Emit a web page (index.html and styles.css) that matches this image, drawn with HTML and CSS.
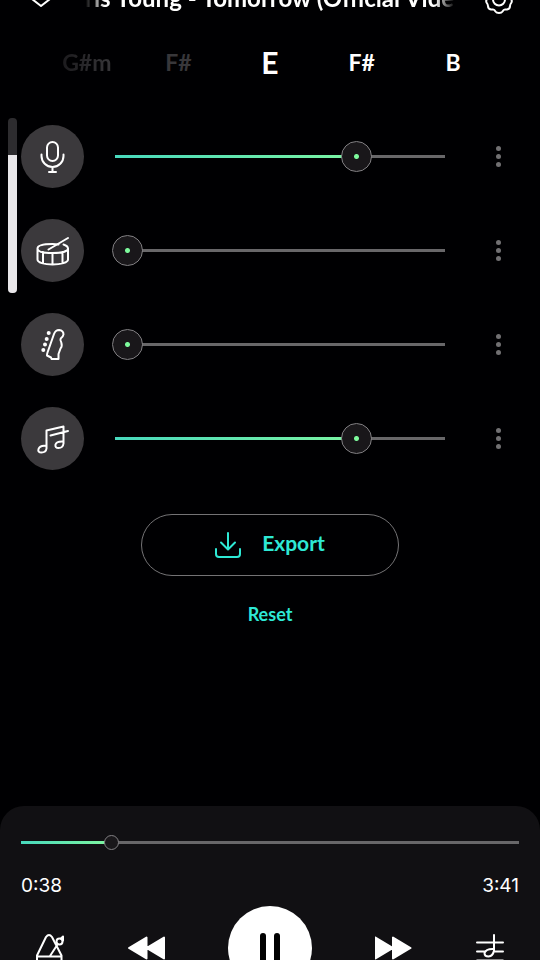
FILE: index.html
```html
<!DOCTYPE html>
<html lang="en">
<head>
<meta charset="utf-8">
<meta name="viewport" content="width=device-width, initial-scale=1">
<title>Mixer</title>
<link rel="stylesheet" href="styles.css">
</head>
<body>
<div class="app">
  <header class="header">
    <button class="icon-button" type="button" aria-label="Close player">
      <svg width="20" height="20" viewBox="0 0 20 20" class="line-icon"><path d="M1 9l9 7 9-7"/></svg>
    </button>
    <h1 class="title">ris Young - Tomorrow (Official Vide</h1>
    <button class="icon-button" type="button" aria-label="Settings">
      <svg width="28" height="28" viewBox="0 0 28 28" class="line-icon"><path d="M12 1H16Q18 4.500 19.500 4.500H22.500Q25.500 5 25.500 8Q24.500 10.500 25 12Q27.500 14 26.500 16.500Q25 18.500 25 20Q25 23 22 23.500H20Q18.500 23.500 17.500 25.500Q16.500 27 14 27Q11.500 27 10.500 25.500Q9.500 23.500 8 23.500H6Q3 23 3 20Q3 18.500 1.500 16.500Q.5 14 3 12Q3.500 10.500 2.500 8Q2.500 5 5.500 4.500H8.500Q10 4.500 12 1Z"/><circle cx="14" cy="13.500" r="6"/></svg>
    </button>
  </header>

  <ol class="chords">
    <li class="chord past far">G#m</li>
    <li class="chord past">F#</li>
    <li class="chord current">E</li>
    <li class="chord">F#</li>
    <li class="chord">B</li>
  </ol>

  <main class="main">
    <div class="volume" role="img" aria-label="Volume"><div class="volume-level"></div></div>

    <div class="track">
      <label class="badge" for="vocals" aria-label="Vocals">
        <svg width="34" height="34" viewBox="0 0 34 34" class="line-icon"><rect x="11" y="2" width="11" height="19" rx="5.500"/><path d="M5.500 14.500v1.500a11 11 0 0 0 22 0v-1.500M16.500 27v5M13 32h7"/></svg>
      </label>
      <input class="fader" id="vocals" type="range" value="75" style="--level: 75%">
      <button class="more" type="button" aria-label="Vocals options"><span></span><span></span><span></span></button>
    </div>
    <div class="track">
      <label class="badge" for="drums" aria-label="Drums">
        <svg width="34" height="34" viewBox="0 0 34 34" class="line-icon"><path d="M27.500 10.500Q32 12 32 14.500C32 17.500 25 19 16.500 19S1.500 17.500 1.500 14.500 8 10 16.500 10q3.500 0 6 .4M1.500 14.500v11C1.500 28.500 8 30.500 16.500 30.500S32 28.500 32 25.500v-11M7 18v11M16.500 19v11.500M26.500 18v11"/><path d="M12.500 15.500L32 4"/></svg>
      </label>
      <input class="fader" id="drums" type="range" value="0" style="--level: 0%">
      <button class="more" type="button" aria-label="Drums options"><span></span><span></span><span></span></button>
    </div>
    <div class="track">
      <label class="badge" for="bass" aria-label="Bass">
        <svg width="34" height="34" viewBox="0 0 34 34" class="line-icon"><path d="M11.500 24.500L18 6Q19.500 2 23 2Q27.500 2.500 27.500 6.500Q27.300 8.500 24.700 10.500Q23.800 12 25.300 14.500Q26.500 18 24.500 20.500L22.500 26V31H15.500L15 29.500L11 27.500Q11 26 11.500 24.500Z"/><g class="pegs"><circle cx="12.700" cy="5" r="2"/><circle cx="10.700" cy="11" r="2"/><circle cx="9" cy="16.500" r="2"/><circle cx="7.300" cy="22" r="2"/></g></svg>
      </label>
      <input class="fader" id="bass" type="range" value="0" style="--level: 0%">
      <button class="more" type="button" aria-label="Bass options"><span></span><span></span><span></span></button>
    </div>
    <div class="track">
      <label class="badge" for="other" aria-label="Other instruments">
        <svg width="34" height="34" viewBox="0 0 34 34" class="line-icon"><path d="M10.500 26.500V8.500L27.500 4.500V21.500M14.500 13.500L32 9M10.500 24Q4 23 2.500 27Q1.500 30.500 5.500 30.500Q10 30.500 10.500 26.500M27.500 19.500Q20.500 19 19.500 22.500Q18.800 26 22.500 26Q27 26 27.500 21.500"/></svg>
      </label>
      <input class="fader" id="other" type="range" value="75" style="--level: 75%">
      <button class="more" type="button" aria-label="Other options"><span></span><span></span><span></span></button>
    </div>
  </main>

  <div class="actions">
    <button class="export" type="button">
      <svg width="26" height="26" viewBox="0 0 26 26" class="line-icon"><path d="M1 17v5q0 3 3 3h18q3 0 3-3v-5M13 1v16M6 10.500l7 7 7-7"/></svg>
      <span>Export</span>
    </button>
    <button class="reset" type="button">Reset</button>
  </div>

  <footer class="player">
    <input class="seek" type="range" max="221" value="38" aria-label="Position" style="--level: 17.2%">
    <div class="times"><span>0:38</span><span>3:41</span></div>
    <div class="controls">
      <button class="control" type="button" aria-label="Metronome">
        <svg width="28" height="28" viewBox="0 0 28 28" class="line-icon"><path d="M1 27v-5.500L10 3Q13 -1 16 3L25.500 21.500V27H1M1 22.500H25.500M14 22L21.500 10.500M25 4.500L27 2.500v4"/><circle cx="23.500" cy="7.500" r="3"/></svg>
      </button>
      <button class="control" type="button" aria-label="Rewind">
        <svg width="38" height="24" viewBox="0 0 38 24" class="solid-icon"><path d="M19.500 1.500v21L2 12ZM37 1.500v21L19.500 12Z"/></svg>
      </button>
      <button class="pause" type="button" aria-label="Pause"><span></span><span></span></button>
      <button class="control" type="button" aria-label="Fast forward">
        <svg width="38" height="24" viewBox="0 0 38 24" class="solid-icon"><path d="M.5 1.500v21L18 12ZM18 1.500v21L35.500 12Z"/></svg>
      </button>
      <button class="control" type="button" aria-label="Chords">
        <svg width="28" height="28" viewBox="0 0 28 28" class="line-icon"><path d="M1 8.500h26M1 17.500h8M18 17.500h9M1 26.500h26M18 1v16.500M18 15Q10 14.500 8.500 19Q8.500 22.500 12.500 22.500Q17 22 18 16.500"/></svg>
      </button>
    </div>
  </footer>
</div>
</body>
</html>
```
FILE: styles.css
```css
* {
  box-sizing: border-box;
}

body {
  margin: 0;
  background: #000002;
  color: #fff;
  font-family: Lato, "Liberation Sans", sans-serif;
}

button {
  padding: 0;
  border: 0;
  background: none;
  color: inherit;
  font: inherit;
}

svg {
  display: block;
}

.line-icon {
  fill: none;
  stroke: currentColor;
  stroke-width: 2;
  stroke-linecap: round;
  stroke-linejoin: round;
}

.solid-icon {
  fill: currentColor;
  stroke: currentColor;
  stroke-width: 2;
  stroke-linejoin: round;
}

.pegs {
  fill: currentColor;
  stroke: none;
}

.app {
  display: flex;
  flex-direction: column;
  height: 100vh;
  overflow: hidden;
}

.header {
  display: flex;
  flex: none;
  align-items: center;
  gap: 24px;
  height: 48px;
  margin-top: -24px;
  padding: 0 21px;
}

.icon-button {
  display: grid;
  flex: none;
  place-items: center;
  width: 40px;
  height: 40px;
}

.title {
  flex: 1;
  margin: 0;
  padding-bottom: 4px;
  overflow: hidden;
  font-size: 24px;
  line-height: 40px;
  font-weight: 700;
  white-space: nowrap;
  mask-image: linear-gradient(90deg, transparent, #000 20px, #000 calc(100% - 20px), transparent);
}

.chords {
  display: grid;
  flex: none;
  grid-template-columns: repeat(5, 1fr);
  align-items: center;
  height: 48px;
  margin: 14px 0 0;
  padding: 0 41px;
  list-style: none;
}

.chord {
  font-size: 23px;
  line-height: 40px;
  font-weight: 700;
  text-align: center;
}

.chord.past {
  color: #38373a;
}

.chord.far {
  color: transparent;
  background: linear-gradient(90deg, #161518 10%, #38373a 80%);
  background-clip: text;
}

.chord.current {
  font-size: 30px;
}

.main {
  position: relative;
  display: grid;
  flex: none;
  gap: 31px;
  margin-top: 39px;
  padding: 0 21px;
}

.volume {
  position: absolute;
  top: -7px;
  left: 8px;
  display: flex;
  flex-direction: column;
  justify-content: flex-end;
  width: 9px;
  height: 175px;
  overflow: hidden;
  border-radius: 4px;
  background: #2d2c2f;
}

.volume-level {
  height: 79%;
  background: #e9e7ea;
}

.track {
  display: flex;
  align-items: center;
}

.badge {
  display: grid;
  flex: none;
  place-items: center;
  width: 63px;
  height: 63px;
  border-radius: 50%;
  background: #3b393c;
}

.fader,
.seek {
  --thumb: 31px;
  --inset: 3px;
  display: block;
  min-width: 0;
  height: var(--thumb);
  margin: 0;
  appearance: none;
  background:
    linear-gradient(90deg, #48d9bd, #7df5a1) var(--inset) 50% / calc(var(--level) - var(--inset)) 3px no-repeat,
    linear-gradient(#686769, #686769) 50% 50% / calc(100% - 2 * var(--inset)) 3px no-repeat;
}

.fader {
  flex: 1;
  margin: 0 35px 0 28px;
}

.seek {
  --thumb: 15px;
  --inset: 0px;
  width: 100%;
}

.fader::-webkit-slider-thumb,
.seek::-webkit-slider-thumb {
  width: var(--thumb);
  height: var(--thumb);
  appearance: none;
  border: 1px solid #828083;
  border-radius: 50%;
  background: #19171a;
}

.fader::-webkit-slider-thumb {
  background: radial-gradient(circle, #7dfa9c 2px, #19171a 3px);
}

.more {
  display: flex;
  flex: none;
  flex-direction: column;
  align-items: center;
  justify-content: center;
  gap: 3px;
  width: 30px;
  height: 40px;
  margin-right: 6px;
}

.more span {
  width: 5px;
  height: 5px;
  border-radius: 50%;
  background: #717072;
}

.actions {
  display: flex;
  flex: none;
  flex-direction: column;
  align-items: center;
  gap: 24px;
  margin-top: 44px;
  color: #2ee9d5;
  font-weight: 700;
}

.export {
  display: flex;
  align-items: center;
  justify-content: center;
  gap: 21px;
  width: 258px;
  height: 62px;
  border: 1px solid #747375;
  border-radius: 31px;
  font-size: 21px;
  line-height: 28px;
}

.export span {
  padding-bottom: 4px;
}

.reset {
  font-size: 18px;
  line-height: 28px;
}

.player {
  flex: none;
  margin-top: auto;
  margin-bottom: -64px;
  padding: 29px 21px 34px;
  border-radius: 24px 24px 0 0;
  background: #111013;
}

.times {
  display: flex;
  justify-content: space-between;
  margin-top: 24px;
  font-family: Inter, "Liberation Sans", sans-serif;
  font-size: 19px;
  line-height: 24px;
}

.controls {
  display: flex;
  align-items: center;
  justify-content: space-between;
  margin-top: 8px;
  padding: 0 15px;
}

.pause {
  display: flex;
  align-items: center;
  justify-content: center;
  gap: 8px;
  width: 84px;
  height: 84px;
  border-radius: 50%;
  background: #fff;
}

.pause span {
  width: 6px;
  height: 30px;
  border-radius: 3px;
  background: #000;
}
```
